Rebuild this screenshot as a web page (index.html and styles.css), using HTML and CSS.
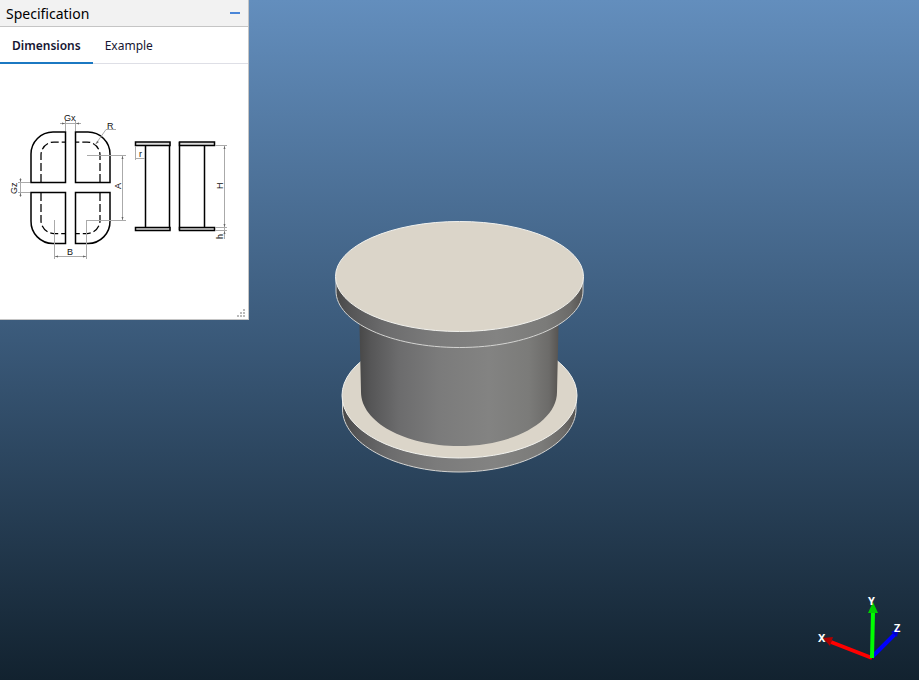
FILE: index.html
```html
<!DOCTYPE html>
<html lang="en">
<head>
<meta charset="utf-8">
<title>Model viewer</title>
<link rel="stylesheet" href="styles.css">
</head>
<body>
<main class="viewport">
  <svg class="model" viewBox="0 0 260 260" role="img" aria-label="3D model">
    <defs>
      <linearGradient id="side" x1="0" x2="1" y1="0" y2="0">
        <stop offset="0" stop-color="#484848"/>
        <stop offset=".06" stop-color="#565657"/>
        <stop offset=".2" stop-color="#6c6c6d"/>
        <stop offset=".4" stop-color="#7b7b7b"/>
        <stop offset=".65" stop-color="#838382"/>
        <stop offset=".85" stop-color="#7b7b79"/>
        <stop offset=".95" stop-color="#6c6b69"/>
        <stop offset="1" stop-color="#565350"/>
      </linearGradient>
    </defs>
    <path class="edge rim" fill="url(#side)" d="M12.500 181V194C12.500 228 65 257 129 257S246 228 246 194V181Z"/>
    <ellipse class="edge face" cx="129.500" cy="180.500" rx="117.500" ry="62.500"/>
    <path fill="url(#side)" d="M29 90L31 177C31 207 75 231 129 231S227 207 227 177L229 90Z"/>
    <path class="edge rim" fill="url(#side)" d="M6 62V76C6 107 61 132.500 129.500 132.500S253 107 253 76V62Z"/>
    <ellipse class="edge face" cx="129.500" cy="61.500" rx="124" ry="55"/>
  </svg>

  <svg class="axes" viewBox="0 0 90 80" role="img" aria-label="Axes">
    <path stroke="#f00" stroke-width="4" d="M57 73L16 57"/>
    <path fill="#b00000" d="M8 53L18 52L15 61Z"/>
    <path stroke="#00f" stroke-width="4" d="M57 72L80 49"/>
    <path fill="#00c" d="M84 43L82 52L76 47Z"/>
    <path stroke="#0f0" stroke-width="4" d="M57 73L58 26"/>
    <path fill="#00d000" d="M58 17L63 28H53Z"/>
    <text x="3" y="57">X</text>
    <text x="53" y="20">Y</text>
    <text x="79" y="47">Z</text>
  </svg>

  <section class="panel">
    <header class="panel-header">
      <h1>Specification</h1>
      <button class="collapse" type="button" aria-label="Collapse"></button>
    </header>
    <nav class="tabs" role="tablist">
      <button class="tab active" type="button" role="tab" aria-selected="true">Dimensions</button>
      <button class="tab" type="button" role="tab" aria-selected="false">Example</button>
    </nav>
    <div class="drawing">
      <svg viewBox="0 0 248 160" role="img" aria-label="Dimension drawing">
        <g class="outline">
          <path d="M65.500 32V82.500H31V54A22 22 0 0 1 53 32ZM75.500 32V82.500H110V54A22 22 0 0 0 88 32ZM65.500 143.500V92.500H31V121A22 22 0 0 0 53 143.500ZM75.500 143.500V92.500H110V121A22 22 0 0 1 88 143.500Z"/>
          <path d="M145.500 45V128M169.500 42V130M179.500 42V130M204.500 45V128"/>
          <path class="flange" d="M135.500 42H170V45.500H135.500ZM135.500 127.500H170V130.500H135.500ZM179.500 42H214.500V45.500H179.500ZM179.500 127.500H214.500V130.500H179.500Z"/>
        </g>
        <g class="hidden-line">
          <path d="M41 82V55A13 13 0 0 1 54 42H65M100 82V55A13 13 0 0 0 87 42H76M41 93V120A13 13 0 0 0 54 133.500H65M100 93V120A13 13 0 0 1 87 133.500H76"/>
        </g>
        <g class="thin">
          <path d="M65.500 20V31M75.500 20V31M60 23.500H81M95 45L106 29.500H116M18 82.500H30M18 92.500H30M20.500 78V97M87 55.500H126M87 120.500H126M122.500 55V120M54.500 120V159M86.500 120V159M54 156.500H87M135.500 46V60M135 58.500H145M215 45.500H227M215 127.500H227M215 130.500H227M224.500 45V139"/>
        </g>
        <path class="arrows" d="M65 23.500l-3-1v2zM76 23.500l3-1v2zM20.500 82l-1-3h2zM20.500 93l-1 3h2zM122.500 56l-1 3h2zM122.500 120l-1-3h2zM55 156.500l3-1v2zM86 156.500l-3-1v2zM224.500 46l-1 3h2zM224.500 127l-1-3h2zM224.500 131l-1 3h2zM96 44l1-3 2 1z"/>
        <text x="64" y="21">Gx</text>
        <text x="107" y="29">R</text>
        <text x="67" y="155">B</text>
        <text x="139" y="57">r</text>
        <text transform="translate(17 94) rotate(-90)">Gz</text>
        <text transform="translate(121 89) rotate(-90)">A</text>
        <text transform="translate(223 89) rotate(-90)">H</text>
        <text transform="translate(223 139) rotate(-90)">h</text>
      </svg>
    </div>
    <svg class="grip" viewBox="0 0 8 8" aria-hidden="true">
      <path d="M6 0h2v2H6zM3 3h2v2H3zM6 3h2v2H6zM0 6h2v2H0zM3 6h2v2H3zM6 6h2v2H6z"/>
    </svg>
  </section>
</main>
</body>
</html>
```
FILE: styles.css
```css
* { box-sizing: border-box; }
body {
  margin: 0;
  font-family: "Noto Sans", "Open Sans", sans-serif;
}
.viewport {
  position: relative;
  display: flex;
  justify-content: center;
  align-items: center;
  min-height: 100vh;
  padding-top: 10px;
  overflow: hidden;
  background: linear-gradient(#638ebd, #3a5979 50%, #12222f);
}
.model { width: 260px; height: 260px; }
.face { fill: #dbd5c9; }
.edge { stroke: #f2f2ee; stroke-width: 1; }
.rim { stroke: #d4d4d2; }
.axes {
  position: absolute;
  right: 14px;
  bottom: 15px;
  width: 90px;
  height: 80px;
  fill: none;
}
.axes text {
  fill: #fff;
  font: bold 11px "Noto Sans", sans-serif;
}
.panel {
  position: absolute;
  top: 0;
  left: 0;
  display: flex;
  flex-direction: column;
  width: 249px;
  height: 320px;
  background: #fff;
  border: solid #c5c5c5;
  border-width: 0 1px 1px 0;
}
.panel-header {
  display: flex;
  align-items: center;
  justify-content: space-between;
  height: 27px;
  padding: 0 7px 0 6px;
  background: #f2f2f2;
  border-bottom: 1px solid #c5c5c5;
}
.panel-header h1 {
  margin: 0;
  font-size: 14px;
  font-weight: 400;
  color: #000;
}
.collapse {
  width: 12px;
  height: 12px;
  padding: 0;
  border: 0;
  background: linear-gradient(#4a86d8, #4a86d8) center / 10px 2px no-repeat;
}
.tabs {
  display: flex;
  height: 37px;
  border-bottom: 1px solid #dedfe6;
}
.tab {
  height: 37px;
  padding: 2px 12px 0;
  border: 0;
  border-bottom: 2px solid transparent;
  background: none;
  font: 400 12px "Noto Sans", "Open Sans", sans-serif;
  color: #161632;
}
.tab.active {
  font-weight: 600;
  border-bottom-color: #1b78c2;
}
.drawing { padding-top: 36px; }
.drawing svg { display: block; width: 100%; }
.drawing text { font: 9px "Liberation Sans", sans-serif; fill: #111; }
.outline, .hidden-line, .thin { fill: none; stroke: #000; }
.outline { stroke-width: 1.500; }
.outline .flange { fill: #ddd; }
.hidden-line { stroke-width: 1.250; stroke-dasharray: 8 3; }
.thin { stroke: #aaa; stroke-width: 1; }
.arrows { fill: #666; }
.grip {
  position: absolute;
  right: 3px;
  bottom: 2px;
  width: 8px;
  height: 8px;
  fill: #bbb;
}
```
